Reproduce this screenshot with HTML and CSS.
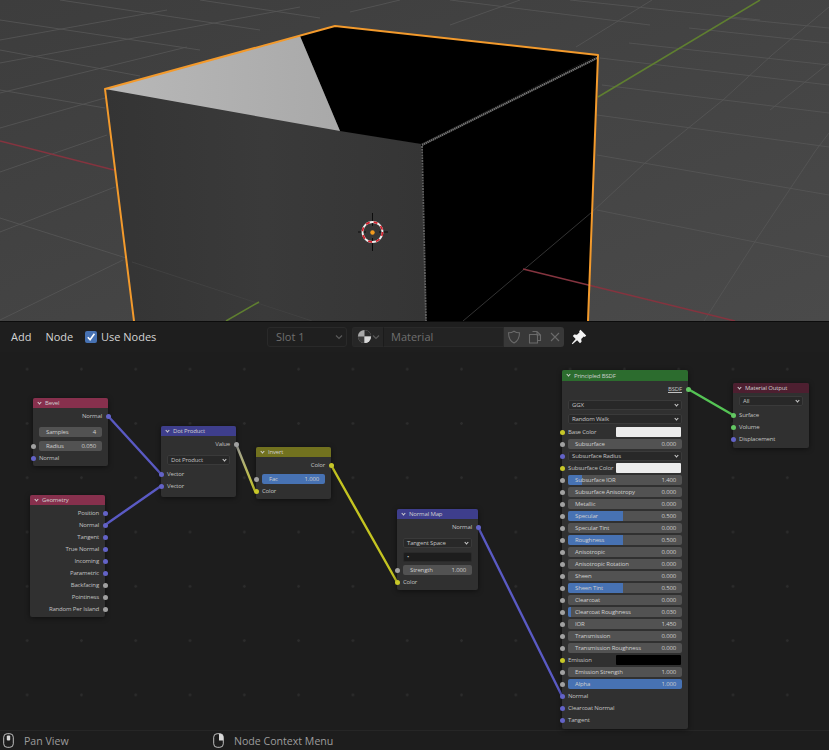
FILE: index.html
```html
<!DOCTYPE html>
<html lang="en">
<head>
<meta charset="utf-8">
<title>Blender shader editor</title>
<link rel="stylesheet" href="styles.css">
</head>
<body>
<div class="app">
  <svg class="viewport" viewBox="0 0 829 321" width="829" height="321" aria-hidden="true">
    <defs>
      <linearGradient id="bgGrad" x1="0" y1="0" x2="1" y2="1">
        <stop offset="0" stop-color="#3d3d3d"/><stop offset="1" stop-color="#4a4a4a"/>
      </linearGradient>
      <linearGradient id="frontGrad" x1="0" y1="0" x2="1" y2="0">
        <stop offset="0" stop-color="#343434"/><stop offset="0.5" stop-color="#3a3a3a"/><stop offset="1" stop-color="#353535"/>
      </linearGradient>
      <linearGradient id="topGrad" x1="0" y1="0" x2="1" y2="0">
        <stop offset="0" stop-color="#b8b8b8"/><stop offset="1" stop-color="#a9a9a9"/>
      </linearGradient>
    </defs>
    <rect width="829" height="321" fill="url(#bgGrad)"/>
    <g class="grid">
      <path d="M0 218L123 257L300 317"/>
      <path d="M597 210L829 257"/><path d="M597 155L829 195"/><path d="M597 115L829 147"/>
      <path d="M602 85L829 113"/><path d="M600 58L829 85"/><path d="M629 43L829 65"/>
      <path d="M689 28L829 43"/><path d="M729 18L829 28"/>
      <path d="M0 90L105 108"/><path d="M0 50L140 76"/><path d="M0 20L200 50"/>
      <path d="M60 0L260 30"/><path d="M200 0L320 18"/><path d="M450 0L650 25"/><path d="M570 0L760 20"/>
      <path d="M704 321L756 240L816 150L829 133"/>
      <path d="M592 212L645 163L723 100L772 55L829 7"/>
      <path d="M576 47L652 0"/><path d="M829 63L770 110"/>
      <path d="M0 320L123 260"/><path d="M0 232L115 187"/><path d="M0 172L107 135"/>
      <path d="M0 128L105 98"/><path d="M0 93L187 47"/><path d="M0 63L300 7"/>
      <path d="M0 40L167 10"/><path d="M350 12L400 0"/><path d="M450 25L520 0"/>
    </g>
    <path class="axis-red" d="M0 141L114 170"/>
    <path class="axis-green" d="M598 97L760 0"/>
    <polygon fill="url(#frontGrad)" points="105,89 421,144 426,321 134,321"/>
    <path class="grid-front" d="M132 262L300 317L312 321"/>
    <path class="axis-green" d="M259 302L226 321"/>
    <polygon fill="#000" points="421,144 598,55 588,321 426,321"/>
    <polygon fill="#000" points="300,36 335,26 598,55 421,144 340,131"/>
    <polygon fill="url(#topGrad)" points="105,89 300,36 340,131"/>
    <path class="grid-black" d="M592 212L463 321"/>
    <path class="axis-red" d="M523 269L735 321"/>
    <path class="cube-noise" d="M422 145L597 58"/>
    <path class="cube-noise-v" d="M422 146L426 321"/>
    <path class="cube-edge" d="M134 321L105 89L335 26L598 55L588 321"/>
    <g class="cursor">
      <path class="cursor-tick" d="M372.500 213V226M372.500 238V251M358 232H366M379 232H388"/>
      <ellipse class="cursor-white" cx="372.500" cy="232" rx="10" ry="10"/>
      <ellipse class="cursor-red" cx="372.500" cy="232" rx="10" ry="10"/>
      <circle class="cursor-origin" cx="372.500" cy="232.500" r="2.200"/>
    </g>
  </svg>

  <div class="editor">
    <svg class="links" viewBox="0 0 829 409" width="829" height="409" aria-hidden="true">
      <defs>
        <linearGradient id="valueLink" gradientUnits="userSpaceOnUse" x1="236" y1="123" x2="255" y2="170">
          <stop offset="0" stop-color="#a1a1a1"/><stop offset="1" stop-color="#c7c729"/>
        </linearGradient>
      </defs>
      <path class="link link-vector" d="M108 95L161 153"/>
      <path class="link link-vector" d="M105 204L161 165"/>
      <path class="link link-value" d="M236 123L255 170"/>
      <path class="link link-color" d="M331 144L397 261"/>
      <path class="link link-vector" d="M478 206L562 375"/>
      <path class="link link-shader" d="M688 68L733 94"/>
    </svg>

    <header class="editor-header">
      <nav class="menu">
        <span class="menu-item">Add</span>
        <span class="menu-item">Node</span>
      </nav>
      <label class="use-nodes">
        <span class="checkbox">
          <svg viewBox="0 0 12 12" width="12" height="12" aria-hidden="true"><path d="M2.800 6.200L5.100 8.800L9.400 2.800"/></svg>
        </span>
        <span>Use Nodes</span>
      </label>
      <div class="slot-select">
        <span>Slot 1</span>
        <svg class="chev-dim" viewBox="0 0 8 8" width="8" height="8" aria-hidden="true"><path d="M1 2.500L4 5.500L7 2.500"/></svg>
      </div>
      <div class="material-group">
        <div class="material-browse">
          <svg class="sphere" viewBox="0 0 16 16" width="15" height="15" aria-hidden="true">
            <circle cx="8" cy="8" r="7" fill="#a8a8a8"/>
            <path d="M8 1A7 7 0 0 1 15 8H8Z" fill="#2a2a2a"/>
            <path d="M8 8H1A7 7 0 0 0 8 15Z" fill="#3a3a3a"/>
            <path d="M8 8H15A7 7 0 0 1 8 15Z" fill="#d8d8d8"/>
          </svg>
          <svg class="chev-dim" viewBox="0 0 8 8" width="8" height="8" aria-hidden="true"><path d="M1 2.500L4 5.500L7 2.500"/></svg>
        </div>
        <div class="material-name">Material</div>
        <div class="material-actions">
          <svg class="act-icon" viewBox="0 0 14 14" width="14" height="14" aria-hidden="true"><path d="M7 1.200C5 2.600 3.400 2.800 1.500 2.800C1.500 7.500 2.500 11 7 13C11.500 11 12.500 7.500 12.500 2.800C10.600 2.800 9 2.600 7 1.200Z"/></svg>
          <svg class="act-icon" viewBox="0 0 14 14" width="14" height="14" aria-hidden="true"><path d="M4.500 1.500H9L12.500 5V10.500H9.500M9 1.500V5H12.500M1.500 4.500H9.500V13H1.500Z"/></svg>
          <svg class="act-icon" viewBox="0 0 14 14" width="14" height="14" aria-hidden="true"><path d="M3 3L11 11M11 3L3 11"/></svg>
        </div>
      </div>
      <svg class="pin" viewBox="0 0 16 16" width="16" height="16" aria-hidden="true">
        <path d="M9.500 0.800L15.200 6.500L13.800 7.900L12.800 7.400L10.200 10L10.600 12.800L9 14.200L6.100 11.300L1.500 15.200L0.800 14.500L4.700 9.900L1.800 7L3.200 5.400L6 5.800L8.600 3.200L8.100 2.200Z"/>
      </svg>
    </header>

    <section class="node node-bevel">
      <div class="node-head head-input"><i class="chev"></i>Bevel</div>
      <div class="row out"><span>Normal</span><b class="sock s-vector"></b></div>
      <div class="row gap4"><div class="field"><span>Samples</span><span>4</span></div></div>
      <div class="row gap2"><b class="sock in s-value"></b><div class="field"><span>Radius</span><span>0.050</span></div></div>
      <div class="row"><b class="sock in s-vector"></b><span>Normal</span></div>
    </section>

    <section class="node node-geometry">
      <div class="node-head head-input"><i class="chev"></i>Geometry</div>
      <div class="row out"><span>Position</span><b class="sock s-vector"></b></div>
      <div class="row out"><span>Normal</span><b class="sock s-vector"></b></div>
      <div class="row out"><span>Tangent</span><b class="sock s-vector"></b></div>
      <div class="row out"><span>True Normal</span><b class="sock s-vector"></b></div>
      <div class="row out"><span>Incoming</span><b class="sock s-vector"></b></div>
      <div class="row out"><span>Parametric</span><b class="sock s-vector"></b></div>
      <div class="row out"><span>Backfacing</span><b class="sock s-value"></b></div>
      <div class="row out"><span>Pointiness</span><b class="sock s-value"></b></div>
      <div class="row out"><span>Random Per Island</span><b class="sock s-value"></b></div>
    </section>

    <section class="node node-dot">
      <div class="node-head head-vector"><i class="chev"></i>Dot Product</div>
      <div class="row out"><span>Value</span><b class="sock s-value"></b></div>
      <div class="row gap4"><div class="select"><span>Dot Product</span><i class="chev chev-sm"></i></div></div>
      <div class="row gap2"><b class="sock in s-vector"></b><span>Vector</span></div>
      <div class="row"><b class="sock in s-vector"></b><span>Vector</span></div>
    </section>

    <section class="node node-invert">
      <div class="node-head head-color"><i class="chev"></i>Invert</div>
      <div class="row out"><span>Color</span><b class="sock s-color"></b></div>
      <div class="row gap2"><b class="sock in s-value"></b><div class="field full"><span>Fac</span><span>1.000</span></div></div>
      <div class="row"><b class="sock in s-color"></b><span>Color</span></div>
    </section>

    <section class="node node-normal">
      <div class="node-head head-vector"><i class="chev"></i>Normal Map</div>
      <div class="row out"><span>Normal</span><b class="sock s-vector"></b></div>
      <div class="row gap4"><div class="select"><span>Tangent Space</span><i class="chev chev-sm"></i></div></div>
      <div class="row gap2"><div class="select uv"><span>&#8226;</span></div></div>
      <div class="row gap1"><b class="sock in s-value"></b><div class="field"><span>Strength</span><span>1.000</span></div></div>
      <div class="row"><b class="sock in s-color"></b><span>Color</span></div>
    </section>

    <section class="node node-principled">
      <div class="node-head head-shader"><i class="chev"></i>Principled BSDF</div>
      <div class="row out"><span class="underlined">BSDF</span><b class="sock s-shader"></b></div>
      <div class="row gap4"><div class="select"><span>GGX</span><i class="chev chev-sm"></i></div></div>
      <div class="row gap2"><div class="select"><span>Random Walk</span><i class="chev chev-sm"></i></div></div>
      <div class="row gap1"><b class="sock in s-color"></b><span class="swatch-label">Base Color</span><i class="swatch"></i></div>
      <div class="row"><b class="sock in s-value"></b><div class="field"><span>Subsurface</span><span>0.000</span></div></div>
      <div class="row"><b class="sock in s-vector"></b><div class="select"><span>Subsurface Radius</span><i class="chev chev-sm"></i></div></div>
      <div class="row"><b class="sock in s-color"></b><span class="swatch-label">Subsurface Color</span><i class="swatch"></i></div>
      <div class="row"><b class="sock in s-value"></b><div class="field"><i class="fill" style="width:12.500%"></i><span>Subsurface IOR</span><span>1.400</span></div></div>
      <div class="row"><b class="sock in s-value"></b><div class="field"><span>Subsurface Anisotropy</span><span>0.000</span></div></div>
      <div class="row"><b class="sock in s-value"></b><div class="field"><span>Metallic</span><span>0.000</span></div></div>
      <div class="row"><b class="sock in s-value"></b><div class="field"><i class="fill" style="width:48.500%"></i><span>Specular</span><span>0.500</span></div></div>
      <div class="row"><b class="sock in s-value"></b><div class="field"><span>Specular Tint</span><span>0.000</span></div></div>
      <div class="row"><b class="sock in s-value"></b><div class="field"><i class="fill" style="width:48.500%"></i><span>Roughness</span><span>0.500</span></div></div>
      <div class="row"><b class="sock in s-value"></b><div class="field"><span>Anisotropic</span><span>0.000</span></div></div>
      <div class="row"><b class="sock in s-value"></b><div class="field"><span>Anisotropic Rotation</span><span>0.000</span></div></div>
      <div class="row"><b class="sock in s-value"></b><div class="field"><span>Sheen</span><span>0.000</span></div></div>
      <div class="row"><b class="sock in s-value"></b><div class="field"><i class="fill" style="width:48.500%"></i><span>Sheen Tint</span><span>0.500</span></div></div>
      <div class="row"><b class="sock in s-value"></b><div class="field"><span>Clearcoat</span><span>0.000</span></div></div>
      <div class="row"><b class="sock in s-value"></b><div class="field"><i class="fill" style="width:3%"></i><span>Clearcoat Roughness</span><span>0.030</span></div></div>
      <div class="row"><b class="sock in s-value"></b><div class="field"><span>IOR</span><span>1.450</span></div></div>
      <div class="row"><b class="sock in s-value"></b><div class="field"><span>Transmission</span><span>0.000</span></div></div>
      <div class="row"><b class="sock in s-value"></b><div class="field"><span>Transmission Roughness</span><span>0.000</span></div></div>
      <div class="row"><b class="sock in s-color"></b><span class="swatch-label">Emission</span><i class="swatch swatch-black"></i></div>
      <div class="row"><b class="sock in s-value"></b><div class="field"><span>Emission Strength</span><span>1.000</span></div></div>
      <div class="row"><b class="sock in s-value"></b><div class="field full"><span>Alpha</span><span>1.000</span></div></div>
      <div class="row"><b class="sock in s-vector"></b><span>Normal</span></div>
      <div class="row"><b class="sock in s-vector"></b><span>Clearcoat Normal</span></div>
      <div class="row"><b class="sock in s-vector"></b><span>Tangent</span></div>
    </section>

    <section class="node node-output">
      <div class="node-head head-output"><i class="chev"></i>Material Output</div>
      <div class="row"><div class="select"><span>All</span><i class="chev chev-sm"></i></div></div>
      <div class="row gap2"><b class="sock in s-shader"></b><span>Surface</span></div>
      <div class="row"><b class="sock in s-shader"></b><span>Volume</span></div>
      <div class="row"><b class="sock in s-vector"></b><span>Displacement</span></div>
    </section>
  </div>

  <footer class="status">
    <div class="hint hint-pan">
      <svg class="mouse" viewBox="0 0 11 15" width="11" height="15" aria-hidden="true">
        <rect x="0.700" y="0.700" width="9.600" height="13.600" rx="3.500"/>
        <rect class="mouse-fill" x="3.800" y="2.500" width="3.400" height="5" rx="1"/>
      </svg>
      <span>Pan View</span>
    </div>
    <div class="hint">
      <svg class="mouse" viewBox="0 0 11 15" width="11" height="15" aria-hidden="true">
        <rect x="0.700" y="0.700" width="9.600" height="13.600" rx="3.500"/>
        <path class="mouse-fill" d="M6 0.700H7C9 0.700 10.300 2 10.300 4V7.500H6Z"/>
      </svg>
      <span>Node Context Menu</span>
    </div>
  </footer>
</div>
</body>
</html>
```

FILE: styles.css
```css
* { box-sizing: border-box; }

html, body {
  margin: 0;
  padding: 0;
  background: #1d1d1d;
}

.app {
  width: 829px;
  height: 750px;
  display: flex;
  flex-direction: column;
  overflow: hidden;
  font-family: "Open Sans", "DejaVu Sans", sans-serif;
}

/* 3D viewport */
.viewport { display: block; flex: none; }
.grid path { fill: none; stroke: #565656; stroke-width: 1; opacity: .85; }
.grid-front { fill: none; stroke: #414141; stroke-width: 1; }
.grid-black { fill: none; stroke: #333; stroke-width: 1; }
.axis-red { fill: none; stroke: #84343f; stroke-width: 1.500; }
.axis-green { fill: none; stroke: #5f7f30; stroke-width: 1.500; }
.cube-edge { fill: none; stroke: #f39a2c; stroke-width: 2; stroke-linejoin: round; }
.cube-noise { fill: none; stroke: #727272; stroke-width: 2.200; stroke-dasharray: 1.500 .5; }
.cube-noise-v { fill: none; stroke: #626262; stroke-width: 1.800; stroke-dasharray: 2 .8; }
.cursor-tick { fill: none; stroke: #0d0d0d; stroke-width: 1; }
.cursor-white { fill: none; stroke: #eee; stroke-width: 1.800; }
.cursor-red { fill: none; stroke: #d2202c; stroke-width: 1.800; stroke-dasharray: 4 4; }
.cursor-origin { fill: #f39a1c; }

/* Node editor */
.editor {
  position: relative;
  flex: 1;
  min-height: 0;
  background-color: #1d1d1d;
  background-image: radial-gradient(circle, #2c2c2c 0, #2c2c2c 1px, transparent 1.600px);
  background-size: 54.300px 54.300px;
  background-position: 0 20px;
  border-top: 1px solid #0c0c0c;
}

.links {
  position: absolute;
  left: 0;
  top: -1px;
  z-index: 1;
}
.link { fill: none; stroke-width: 2.400; stroke-linecap: round; }
.link-vector { stroke: #5a5ac4; }
.link-value { stroke: url(#valueLink); }
.link-color { stroke: #c4c421; }
.link-shader { stroke: #55c455; }

.editor-header {
  position: relative;
  z-index: 3;
  height: 30px;
  display: flex;
  align-items: center;
  padding: 0 0 1px 11px;
  background: #1e1e1e;
  font-size: 11px;
  color: #d4d4d4;
}

.menu { display: flex; gap: 14px; width: 74px; flex: none; }
.use-nodes { display: flex; align-items: center; gap: 4px; width: 182px; flex: none; }
.checkbox {
  width: 12px;
  height: 12px;
  border-radius: 2px;
  background: #4772b3;
  display: flex;
}
.checkbox path { fill: none; stroke: #fff; stroke-width: 1.600; }

.slot-select {
  width: 80px;
  height: 20px;
  flex: none;
  display: flex;
  align-items: center;
  justify-content: space-between;
  padding: 0 3px 0 8px;
  background: #1f1f1f;
  border: 1px solid #292929;
  border-radius: 3px;
  color: #6f6f6f;
}
.chev-dim { flex: none; }
.chev-dim path { fill: none; stroke: #5a5a5a; stroke-width: 1.200; }

.material-group {
  margin-left: 5px;
  height: 20px;
  width: 212px;
  flex: none;
  display: flex;
  border-radius: 3px;
  overflow: hidden;
}
.material-browse {
  width: 32px;
  display: flex;
  align-items: center;
  gap: 0;
  padding-left: 4px;
  background: #262626;
  border: 1px solid #292929;
  border-right: 1px solid #1b1b1b;
}
.material-name {
  flex: 1;
  display: flex;
  align-items: center;
  padding-left: 7px;
  background: #232323;
  border: 1px solid #292929;
  border-left: 0;
  color: #6f6f6f;
}
.material-actions {
  width: 60px;
  display: flex;
  align-items: center;
  justify-content: space-between;
  padding: 0 2px 0 3px;
  background: #383838;
}
.act-icon path { fill: none; stroke: #6a6a6a; stroke-width: 1.100; }
.pin { margin-left: 7px; flex: none; }
.pin path { fill: #f4f4f4; }

/* Nodes */
.node {
  position: absolute;
  z-index: 2;
  background: #303030;
  border-radius: 2px;
  box-shadow: 0 1px 5px rgba(0, 0, 0, .5);
  font-size: 6px;
  line-height: 10px;
  letter-spacing: -.16px;
  color: #c2c2c2;
  padding-bottom: 2px;
}
.node-bevel { left: 33px; top: 76px; width: 75px; }
.node-geometry { left: 30px; top: 173px; width: 75px; }
.node-dot { left: 161px; top: 104px; width: 75px; padding-bottom: 5px; }
.node-invert { left: 256px; top: 125px; width: 75px; }
.node-normal { left: 397px; top: 187px; width: 81px; }
.node-principled { left: 562px; top: 48px; width: 126px; padding-bottom: 3px; }
.node-output { left: 733px; top: 61px; width: 76px; padding-bottom: 3px; }

.node-head {
  height: 10px;
  display: flex;
  align-items: center;
  gap: 3px;
  padding-left: 5px;
  margin-bottom: 2px;
  border-radius: 2px 2px 0 0;
  color: #cfcfcf;
}
.head-input { background: #87304d; }
.head-vector { background: #3e3e8c; }
.head-color { background: #72721f; }
.head-shader { background: #2c6c2e; height: 11px; }
.head-output { background: #4d1f30; }

.chev {
  width: 3px;
  height: 3px;
  flex: none;
  margin: -2px 1px 0 0;
  border-right: 1px solid #d0d0d0;
  border-bottom: 1px solid #d0d0d0;
  transform: rotate(45deg);
}
.chev-sm { margin: -2px 1px 0 0; }

.row {
  position: relative;
  height: 12px;
  display: flex;
  align-items: center;
  padding: 0 6px;
}
.row.out { justify-content: flex-end; }
.gap1 { margin-top: 1px; }
.gap2 { margin-top: 2px; }
.gap4 { margin-top: 4px; }

.sock {
  position: absolute;
  top: 3.500px;
  right: -2.500px;
  width: 5px;
  height: 5px;
  border-radius: 50%;
}
.sock.in { left: -2.500px; right: auto; }
.s-vector { background: #6363c7; }
.s-value { background: #a1a1a1; }
.s-color { background: #c7c729; }
.s-shader { background: #63c763; }

.field {
  position: relative;
  flex: 1;
  height: 10px;
  display: flex;
  justify-content: space-between;
  padding: 0 6px 0 7px;
  background: #525252;
  border-radius: 2px;
  overflow: hidden;
  color: #cfcfcf;
}
.field span { position: relative; white-space: nowrap; }
.field.full { background: #4772b3; }
.fill {
  position: absolute;
  left: 0;
  top: 0;
  bottom: 0;
  background: #4772b3;
}

.select {
  flex: 1;
  height: 10px;
  display: flex;
  justify-content: space-between;
  align-items: center;
  padding: 0 2px 0 3px;
  background: #282828;
  border: 1px solid #3a3a3a;
  border-radius: 2px;
  color: #c2c2c2;
}
.uv { background: #1d1d1d; border-color: #2a2a2a; }

.swatch-label { width: 48px; flex: none; white-space: nowrap; }
.swatch {
  width: 65px;
  height: 10px;
  flex: none;
  background: #ececec;
  border-radius: 1px;
}
.swatch-black { background: #000; }
.underlined { text-decoration: underline; }

/* Status bar */
.status {
  height: 20px;
  flex: none;
  display: flex;
  align-items: center;
  padding-left: 3px;
  background: #1d1d1d;
  border-top: 1px solid #262626;
  font-size: 10.600px;
  color: #9c9c9c;
}
.hint { display: flex; align-items: center; gap: 10px; }
.hint-pan { width: 210px; }
.mouse rect, .mouse path { fill: none; stroke: #bdbdbd; stroke-width: 1; }
.mouse .mouse-fill { fill: #d8d8d8; stroke: none; }
```
